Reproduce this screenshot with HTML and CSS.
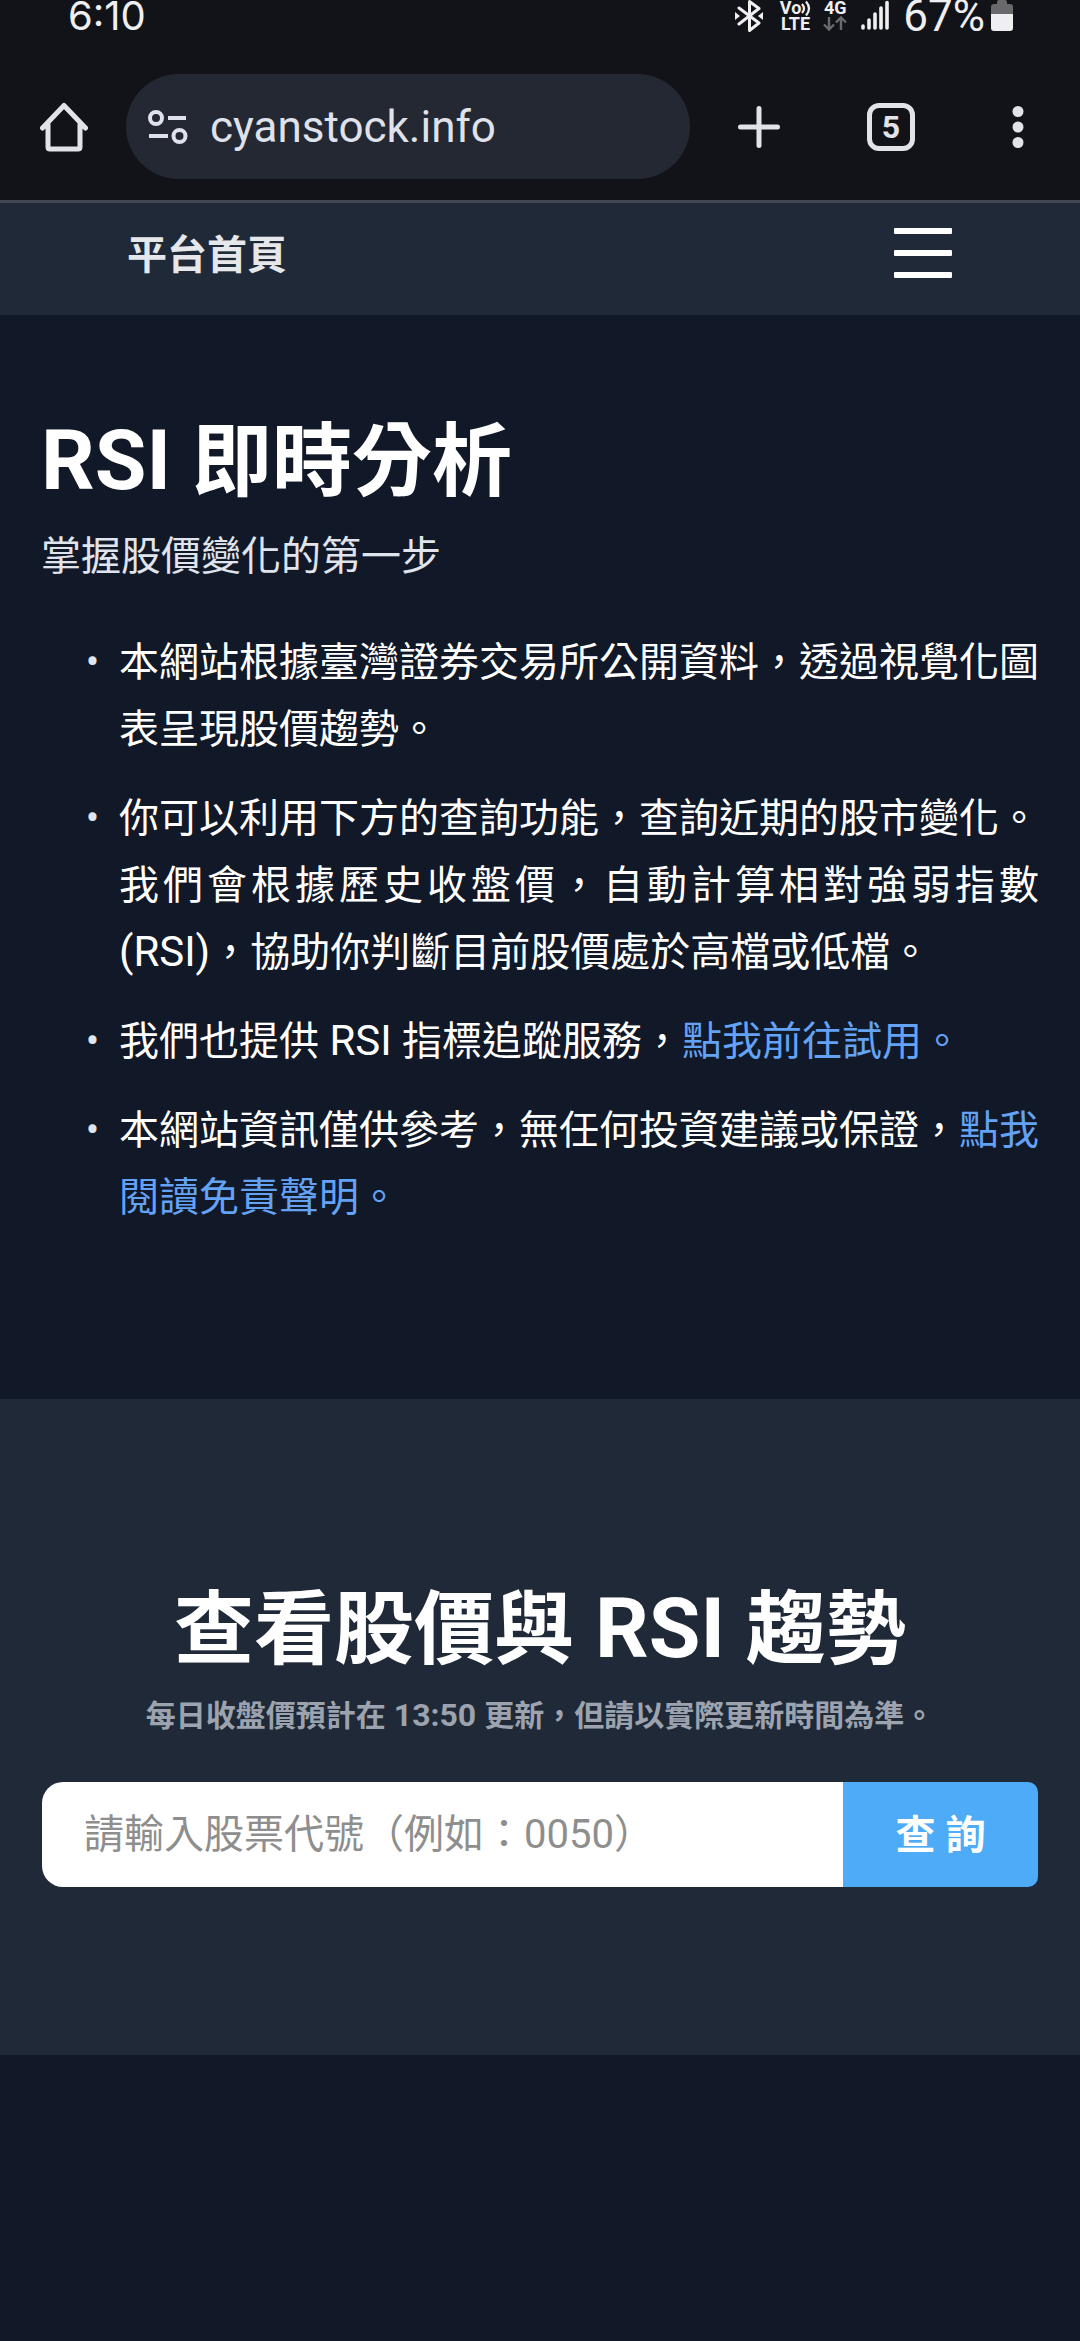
FILE: index.html
```html
<!DOCTYPE html>
<html lang="zh-Hant-TW">
<head>
<meta charset="utf-8">
<meta name="viewport" content="width=device-width, initial-scale=1">
<title>RSI 即時分析</title>
<link rel="stylesheet" href="styles.css">
</head>
<body>
<div class="chrome">
  <div class="status">
    <span class="clock">6:10</span>
    <div class="indicators">
      <svg class="bluetooth" viewBox="0 0 28 32" width="28" height="32" aria-label="藍牙"><path d="M4 8l20 15-9.500 7.500V1.500L24 8.500 4 24" fill="none" stroke="#efeff1" stroke-width="3" stroke-linejoin="round" stroke-linecap="round"/><path d="M0 12l5 4-5 4zM28 12l-5 4 5 4z" fill="#efeff1"/></svg>
      <span class="volte">
        <span class="volte-top">Vo<svg viewBox="0 0 10 16" width="10" height="16" aria-hidden="true"><path d="M1 4q4 4.500 0 9M5 1.500q6 7 0 14" fill="none" stroke="#efeff1" stroke-width="2.200"/></svg></span>
        <span>LTE</span>
      </span>
      <span class="mobile"><span>4G</span>
        <svg viewBox="0 0 24 16" width="24" height="16" aria-hidden="true"><path d="M6 1v12M1 8.500l5 5 5-5M18 14V2M13 6.500l5-5 5 5" fill="none" stroke="#6a6a6e" stroke-width="2.400"/></svg>
      </span>
      <svg class="signal" viewBox="0 0 28 32" width="28" height="32" aria-label="訊號"><g stroke="#efeff1" stroke-width="3.600" stroke-linecap="round"><path d="M2 26v2M8 20v8M14 14v14M20 8v20M26 2.500v25.500"/></g></svg>
      <span class="percent">67%</span>
      <svg class="battery" viewBox="0 0 22 32" width="22" height="32" aria-hidden="true"><path d="M6 2q0-2 2-2h6q2 0 2 2v2h3q3 0 3 3v7H0V7q0-3 3-3h3z" fill="#69696c"/><path d="M0 14h22v14q0 3-3 3H3q-3 0-3-3z" fill="#efeff1"/></svg>
    </div>
  </div>
  <div class="toolbar">
    <button class="tool" aria-label="首頁"><svg viewBox="0 0 48 50" width="48" height="50"><path d="M2.500 26L24 3.500 45.500 26M8 21v24q0 2 2 2h28q2 0 2-2V21" fill="none" stroke="#e2e2e9" stroke-width="5" stroke-linecap="round" stroke-linejoin="round"/></svg></button>
    <div class="address">
      <svg viewBox="0 0 40 36" width="40" height="36" aria-hidden="true"><g fill="none" stroke="#dfe1eb" stroke-width="4"><circle cx="8" cy="9" r="6"/><circle cx="31.500" cy="27" r="6"/><path d="M20 9h18M1 27h19"/></g></svg>
      <input class="url" type="text" value="cyanstock.info" aria-label="網址">
    </div>
    <div class="actions">
      <button class="tool" aria-label="新分頁"><svg viewBox="0 0 42 42" width="42" height="42"><path d="M21 2.500v37M2.500 21h37" stroke="#e2e2e9" stroke-width="5" stroke-linecap="round"/></svg></button>
      <button class="tool tabs" aria-label="5 個分頁">5</button>
      <button class="tool more" aria-label="更多"><svg viewBox="0 0 12 42" width="12" height="42"><g fill="#e2e2e9"><circle cx="6" cy="5.500" r="5.500"/><circle cx="6" cy="21" r="5.500"/><circle cx="6" cy="36.500" r="5.500"/></g></svg></button>
    </div>
  </div>
</div>

<nav class="nav">
  <a class="brand" href="#">平台首頁</a>
  <button class="menu" aria-label="選單"><span></span><span></span><span></span></button>
</nav>

<main>
  <section class="hero">
    <h1 class="title"><span class="latin">RSI </span>即時分析</h1>
    <p class="lead">掌握股價變化的第一步</p>
    <ul class="notes">
      <li>本網站根據臺灣證券交易所公開資料，透過視覺化圖表呈現股價趨勢。</li>
      <li>你可以利用下方的查詢功能，查詢近期的股市變化。我們會根據歷史收盤價，自動計算相對強弱指數 <span class="latin">(RSI)</span>，協助你判斷目前股價處於高檔或低檔。</li>
      <li>我們也提供<span class="latin"> RSI </span>指標追蹤服務，<a href="#">點我前往試用。</a></li>
      <li>本網站資訊僅供參考，無任何投資建議或保證，<a href="#">點我閱讀免責聲明。</a></li>
    </ul>
  </section>

  <section class="search">
    <h2 class="title">查看股價與<span class="latin"> RSI </span>趨勢</h2>
    <p class="hint">每日收盤價預計在<span class="latin"> 13:50 </span>更新，但請以實際更新時間為準。</p>
    <form class="query">
      <input class="code" type="text" placeholder="請輸入股票代號（例如：0050）" aria-label="股票代號">
      <button class="submit" type="button">查 詢</button>
    </form>
  </section>
</main>
</body>
</html>
```
FILE: styles.css
```css
* {
  box-sizing: border-box;
}

body {
  margin: 0;
  min-height: 100vh;
  background: #111827;
  color: #fff;
  font-family: Roboto, "Noto Sans CJK TC", sans-serif;
  font-size: 40px;
}

button,
input {
  margin: 0;
  padding: 0;
  border: 0;
  font: inherit;
}

button {
  background: none;
  color: inherit;
  cursor: pointer;
}

a {
  color: #64a2f5;
  text-decoration: none;
}

svg {
  display: block;
  flex: none;
}

/* Latin runs are set slightly larger than the Chinese text around them */
.latin {
  font-size: 42px;
  line-height: 1;
}

.title .latin {
  font-size: 84px;
}

.hint .latin {
  font-size: 32px;
}

/* Browser chrome */
.chrome {
  background: #121318;
  border-bottom: 3px solid #44474f;
}

.status {
  display: flex;
  align-items: center;
  justify-content: space-between;
  height: 32px;
  padding: 0 67px 0 68px;
  color: #efeff1;
  line-height: 32px;
}

.clock {
  font-family: Inter, Roboto, sans-serif;
  font-size: 40px;
}

.percent {
  font-size: 44px;
}

.indicators {
  display: flex;
  align-items: center;
}

.volte,
.mobile {
  display: flex;
  flex-direction: column;
  align-items: center;
  font-size: 18px;
  font-weight: 700;
  line-height: 16px;
}

.volte {
  margin: 0 12px 0 17px;
}

.volte-top {
  display: flex;
}

.signal {
  margin: 0 14px;
}

.battery {
  margin-left: 6px;
}

.toolbar {
  display: flex;
  align-items: center;
  gap: 38px;
  padding: 42px 56px 21px 40px;
}

.tool {
  display: flex;
  align-items: center;
  justify-content: center;
  flex: none;
}

.address {
  display: flex;
  flex: 1;
  align-items: center;
  gap: 22px;
  min-width: 0;
  height: 105px;
  padding: 0 22px;
  border-radius: 53px;
  background: #242832;
}

.url {
  flex: 1;
  min-width: 0;
  background: none;
  color: #dfe1eb;
  font-size: 44px;
}

.actions {
  display: flex;
  align-items: center;
  gap: 87px;
  margin-left: 10px;
}

.tabs {
  width: 48px;
  height: 48px;
  border: 5px solid #e2e2e9;
  border-radius: 12px;
  color: #e2e2e9;
  font-size: 32px;
  font-weight: 700;
  line-height: 32px;
}

.more {
  margin-left: 10px;
}

/* Site navigation */
.nav {
  display: flex;
  align-items: center;
  justify-content: space-between;
  padding: 20px 128px 32px 127px;
  background: #1f2937;
}

.brand {
  padding-top: 6px;
  color: #e5e7eb;
  font-weight: 700;
  line-height: 54px;
}

.menu {
  display: grid;
  gap: 16px;
}

.menu span {
  width: 58px;
  height: 6px;
  border-radius: 1px;
  background: #fff;
}

/* Intro */
.hero {
  padding: 97px 41px 168px;
}

.title {
  margin: 0;
  font-size: 80px;
  font-weight: 700;
  line-height: 100px;
}

.lead {
  margin: 15px 0 0;
  color: #e0e4ec;
  line-height: 60px;
}

.notes {
  display: grid;
  gap: 22px;
  margin: 42px 0 0;
  padding: 0 0 0 78px;
  line-height: 67px;
  list-style-type: "•  ";
  text-align: justify;
}

.notes li::marker {
  color: #e0e4ec;
}

/* Stock search */
.search {
  padding: 181px 42px 168px;
  background: #1f2937;
  text-align: center;
}

.hint {
  margin: 13px 0 0;
  color: #9ca3af;
  font-size: 30px;
  font-weight: 700;
  line-height: 45px;
}

.query {
  display: flex;
  height: 105px;
  margin-top: 44px;
}

.code {
  flex: 1;
  min-width: 0;
  padding: 0 42px;
  border-radius: 21px 0 0 21px;
  background: #fff;
  color: #111827;
}

.code::placeholder {
  color: #8e8e8e;
  opacity: 1;
}

.submit {
  flex: 0 0 195px;
  padding-bottom: 6px;
  border-radius: 0 10px 10px 0;
  background: #4dabf7;
  font-weight: 700;
}
```
